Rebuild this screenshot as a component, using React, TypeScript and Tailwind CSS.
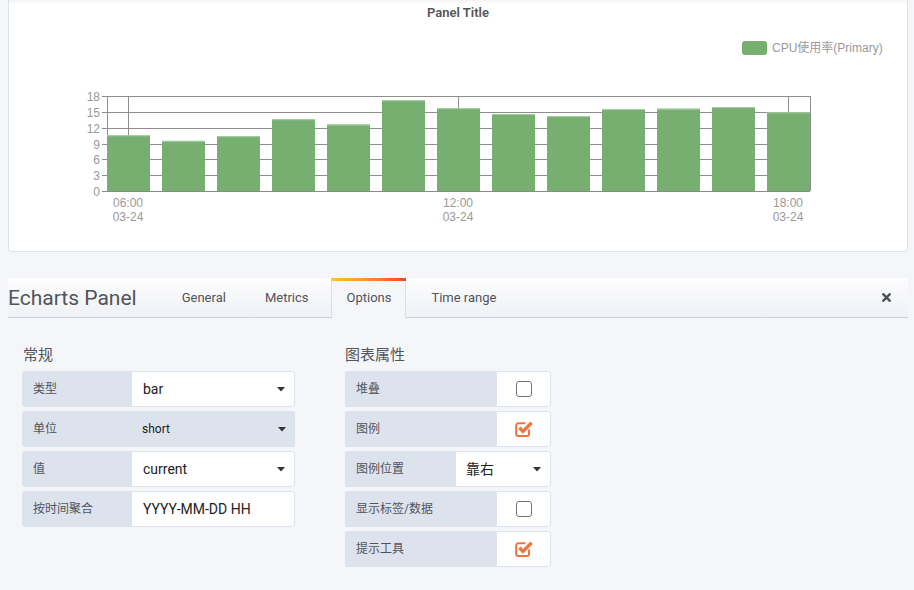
import React from "react";
import { FaTimes } from "react-icons/fa";

const bars = [10.55, 9.5, 10.4, 13.6, 12.6, 17.2, 15.7, 14.6, 14.2, 15.5, 15.6, 15.9, 14.9];
const ticks = [0, 3, 6, 9, 12, 15, 18];
const yOf = (v: number) => 191 - (v * 95) / 18;
const timeMarks = [
  { x: 128, t: "06:00" },
  { x: 458, t: "12:00" },
  { x: 788, t: "18:00" },
];

const Caret = () => (
  <svg width="8" height="5" viewBox="0 0 8 5" className="shrink-0">
    <path d="M0 0h8L4 4.5z" fill="#333" />
  </svg>
);

const Checkbox = ({ checked }: { checked?: boolean }) =>
  checked ? (
    <svg width="19" height="18" viewBox="0 0 19 18">
      <path
        d="M14 9.5v4.5a2 2 0 0 1-2 2H3.2a2 2 0 0 1-2-2V5.3a2 2 0 0 1 2-2h7.3"
        fill="none"
        stroke="#f1733f"
        strokeWidth="2"
      />
      <path d="M4.4 7.8l3.6 3.6 8.6-8.6" fill="none" stroke="#f1733f" strokeWidth="3.4" strokeLinejoin="miter" />
    </svg>
  ) : (
    <div className="w-[16px] h-[16px] rounded-[3px] border-[1.5px] border-[#707378]" />
  );

const App = () => {
  return (
    <div className="w-[914px] h-[590px] overflow-hidden bg-[#f5f6f9] font-['Roboto','Noto_Sans_CJK_SC',sans-serif] text-[#52545c]">
      {/* -------- panel with chart -------- */}
      <div className="ml-[8px] w-[900px] h-[252px] bg-white border border-t-0 border-[#dce3ec] rounded-b-[3px] shadow-[inset_0_4px_4px_-3px_#eceef2]">
        <div className="h-[26px] leading-[26px] text-center text-[13px] font-semibold text-[#555]">Panel Title</div>
        <svg width="898" height="225" viewBox="9 26 898 225" className="block">
          <g fontFamily="'Liberation Sans','Noto Sans CJK SC',sans-serif" fontSize="12" fill="#999">
            {/* legend */}
            <rect x="742" y="41" width="25" height="14" rx="3" fill="#76af70" />
            <text x="772" y="52">CPU使用率(Primary)</text>

            {/* grid */}
            {ticks.map((v) => (
              <g key={v}>
                <line x1="102" x2="810" y1={Math.round(yOf(v)) + 0.5} y2={Math.round(yOf(v)) + 0.5} stroke="#8e8e8e" />
                <text x="100" y={Math.round(yOf(v)) + 5} textAnchor="end">
                  {v}
                </text>
              </g>
            ))}
            {[107, 810, ...timeMarks.map((m) => m.x)].map((x) => (
              <line key={x} x1={x + 0.5} x2={x + 0.5} y1="96" y2="191" stroke="#8e8e8e" />
            ))}

            {/* bars */}
            {bars.map((v, i) => (
              <g key={i}>
                <rect x={107 + i * 55} y={yOf(v)} width="43" height={191 - yOf(v)} fill="#76af70" />
                <rect x={107 + i * 55} y={yOf(v)} width="43" height="1" fill="#a9cfa4" />
              </g>
            ))}
            <line x1="102" x2="810" y1="191.5" y2="191.5" stroke="#8a8a8a" />

            {/* x labels */}
            {timeMarks.map((m) => (
              <g key={m.x}>
                <text x={m.x} y="207" textAnchor="middle">
                  {m.t}
                </text>
                <text x={m.x} y="221" textAnchor="middle">
                  03-24
                </text>
              </g>
            ))}
          </g>
        </svg>
      </div>

      {/* -------- editor header -------- */}
      <div className="mt-[26px] ml-[8px] w-[900px] h-[40px] flex items-end bg-gradient-to-b from-[#fdfdfe] to-[#eff1f4] border-b border-[#c9d2dc]">
        <div className="h-[39px] leading-[40px] text-[21px] text-[#52545c]">Echarts Panel</div>
        <nav className="ml-[29px] flex items-end gap-[7px] text-[13px] text-[#52545c]">
          <div className="h-[39px] leading-[40px] px-[16px]">General</div>
          <div className="h-[39px] leading-[40px] px-[16px]">Metrics</div>
          <div className="relative -mb-px h-[40px] leading-[40px] px-[14px] bg-[#f5f6f9] border-x border-[#d8dfe8]">
            <div className="absolute -left-px -right-px top-0 h-[3px] bg-gradient-to-r from-[#ffc43a] to-[#f5442a]" />
            Options
          </div>
          <div className="h-[39px] leading-[40px] px-[18px]">Time range</div>
        </nav>
        <div className="ml-auto mr-[15px] h-[39px] flex items-center text-[#4c4e55]">
          <FaTimes size={13} />
        </div>
      </div>

      {/* -------- options form -------- */}
      <div className="flex pl-[22px] pt-[27px] gap-[50px]">
        {/* -------- 常规 -------- */}
        <div className="w-[273px]">
          <h3 className="h-[20px] leading-[20px] text-[15px] pl-[1px] text-[#52545c]">常规</h3>
          <div className="mt-[6px] flex flex-col gap-[4px]">
            <div className="flex h-[36px]">
              <div className="w-[109px] flex items-center pl-[11px] text-[12px] bg-[#dce3ec] rounded-l-[3px]">类型</div>
              <div className="flex-1 flex items-center justify-between pl-[11px] pr-[9px] bg-white border border-[#dce3ec] rounded-r-[3px] text-[14px] text-[#222]">
                bar
                <Caret />
              </div>
            </div>
            <div className="flex h-[36px]">
              <div className="w-[109px] flex items-center pl-[11px] text-[12px] bg-[#dce3ec] rounded-l-[3px]">单位</div>
              <div className="flex-1 flex items-center justify-between pl-[11px] pr-[9px] bg-[#dce3ec] rounded-r-[3px] text-[12px] text-[#222]">
                short
                <Caret />
              </div>
            </div>
            <div className="flex h-[36px]">
              <div className="w-[109px] flex items-center pl-[11px] text-[12px] bg-[#dce3ec] rounded-l-[3px]">值</div>
              <div className="flex-1 flex items-center justify-between pl-[11px] pr-[9px] bg-white border border-[#dce3ec] rounded-r-[3px] text-[14px] text-[#222]">
                current
                <Caret />
              </div>
            </div>
            <div className="flex h-[36px]">
              <div className="w-[109px] flex items-center pl-[11px] text-[12px] bg-[#dce3ec] rounded-l-[3px]">按时间聚合</div>
              <div className="flex-1 flex items-center pl-[11px] bg-white border border-[#dce3ec] rounded-r-[3px] text-[14px] text-[#222]">
                YYYY-MM-DD HH
              </div>
            </div>
          </div>
        </div>

        {/* -------- 图表属性 -------- */}
        <div className="w-[206px]">
          <h3 className="h-[20px] leading-[20px] text-[15px] text-[#52545c]">图表属性</h3>
          <div className="mt-[6px] flex flex-col gap-[4px]">
            <div className="flex h-[36px]">
              <div className="w-[151px] flex items-center pl-[11px] text-[12px] bg-[#dce3ec] rounded-l-[3px]">堆叠</div>
              <div className="flex-1 flex items-center justify-center bg-white border border-[#dce3ec] rounded-r-[3px]">
                <Checkbox />
              </div>
            </div>
            <div className="flex h-[36px]">
              <div className="w-[151px] flex items-center pl-[11px] text-[12px] bg-[#dce3ec] rounded-l-[3px]">图例</div>
              <div className="flex-1 flex items-center justify-center pl-[2px] bg-white border border-[#dce3ec] rounded-r-[3px]">
                <Checkbox checked />
              </div>
            </div>
            <div className="flex h-[36px]">
              <div className="w-[110px] flex items-center pl-[11px] text-[12px] bg-[#dce3ec] rounded-l-[3px]">图例位置</div>
              <div className="flex-1 flex items-center justify-between pl-[10px] pr-[9px] bg-white border border-[#dce3ec] rounded-r-[3px] text-[14px] text-[#222]">
                靠右
                <Caret />
              </div>
            </div>
            <div className="flex h-[36px]">
              <div className="w-[151px] flex items-center pl-[11px] text-[12px] bg-[#dce3ec] rounded-l-[3px]">显示标签/数据</div>
              <div className="flex-1 flex items-center justify-center bg-white border border-[#dce3ec] rounded-r-[3px]">
                <Checkbox />
              </div>
            </div>
            <div className="flex h-[36px]">
              <div className="w-[151px] flex items-center pl-[11px] text-[12px] bg-[#dce3ec] rounded-l-[3px]">提示工具</div>
              <div className="flex-1 flex items-center justify-center pl-[2px] bg-white border border-[#dce3ec] rounded-r-[3px]">
                <Checkbox checked />
              </div>
            </div>
          </div>
        </div>
      </div>
    </div>
  );
};

export default App;
